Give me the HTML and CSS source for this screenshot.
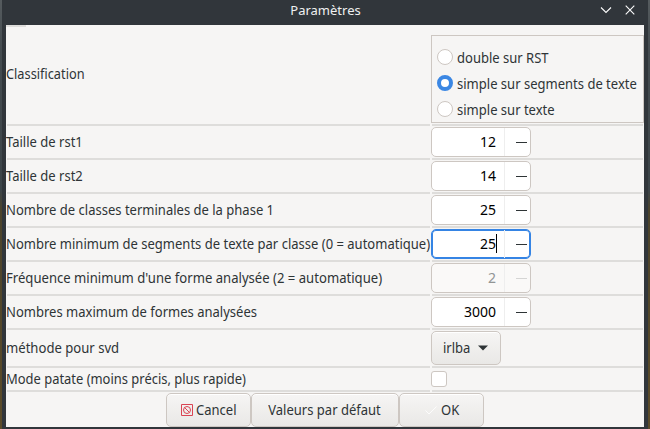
FILE: index.html
```html
<!DOCTYPE html>
<html lang="fr">
<head>
<meta charset="utf-8">
<title>Paramètres</title>
<link rel="stylesheet" href="styles.css">
</head>
<body>
<div class="window">
  <header class="titlebar">
    <h1 class="title">Paramètres</h1>
    <div class="controls">
      <svg width="12" height="12" viewBox="0 0 12 12"><path d="M1 3.5l5 5 5-5"/></svg>
      <svg width="12" height="12" viewBox="0 0 12 12"><path d="M1.7 1.7l8.6 8.6M10.3 1.7l-8.6 8.6"/></svg>
    </div>
  </header>
  <main class="content">
    <div class="row row-first">
      <div class="label"><span class="short">Classification</span></div>
      <div class="field">
        <div class="radios">
          <div class="option"><i class="radio"></i><span>double sur RST</span></div>
          <div class="option"><i class="radio checked"></i><span>simple sur segments de texte</span></div>
          <div class="option"><i class="radio"></i><span>simple sur texte</span></div>
        </div>
      </div>
    </div>
    <div class="row"><div class="label"><span>Taille de rst1</span></div><div class="field"><div class="spin"><span class="value">12</span><span class="minus"></span></div></div></div>
    <div class="row"><div class="label"><span>Taille de rst2</span></div><div class="field"><div class="spin"><span class="value">14</span><span class="minus"></span></div></div></div>
    <div class="row"><div class="label"><span>Nombre de classes terminales de la phase 1</span></div><div class="field"><div class="spin"><span class="value">25</span><span class="minus"></span></div></div></div>
    <div class="row"><div class="label"><span>Nombre minimum de segments de texte par classe (0 = automatique)</span></div><div class="field"><div class="spin focused"><span class="value">25<i class="caret"></i></span><span class="minus"></span></div></div></div>
    <div class="row"><div class="label"><span class="wide">Fréquence minimum d'une forme analysée (2 = automatique)</span></div><div class="field"><div class="spin disabled"><span class="value">2</span><span class="minus"></span></div></div></div>
    <div class="row"><div class="label"><span>Nombres maximum de formes analysées</span></div><div class="field"><div class="spin"><span class="value">3000</span><span class="minus"></span></div></div></div>
    <div class="row row-select"><div class="label"><span class="wide">méthode pour svd</span></div><div class="field"><div class="button select"><span>irlba</span><svg width="10" height="6" viewBox="0 0 10 6"><path d="M0 .5h10L5 5.5z" fill="#2e3436"/></svg></div></div></div>
    <div class="row row-check"><div class="label"><span class="tight">Mode patate (moins précis, plus rapide)</span></div><div class="field"><i class="checkbox"></i></div></div>
    <footer class="actions">
      <div class="button cancel"><svg width="12" height="12" viewBox="0 0 12 12" fill="none" stroke="#da4453"><path d="M.5.5h11v11H.5z"/><circle cx="6" cy="6" r="3.5"/><path d="M3.5 3.5l5 5"/></svg><span>Cancel</span></div>
      <div class="button defaults"><span>Valeurs par défaut</span></div>
      <div class="button ok"><svg width="12" height="12" viewBox="0 0 12 12" fill="none" stroke="#fcfcfc"><path d="M.5 6.5l3.5 3.5L11.5 2.5"/></svg><span>OK</span></div>
    </footer>
  </main>
</div>
</body>
</html>
```

FILE: styles.css
```css
* { box-sizing: border-box; }
body {
  margin: 0;
  width: 650px;
  height: 429px;
  overflow: hidden;
  padding: 0 2px;
  background: linear-gradient(#555b5e, #454c50 50px, #3c4448 190px, #4b432c 210px, #5b4b29);
  font: 14px/20px "Noto Sans", sans-serif;
  color: #2e3436;
}
.window { height: 429px; padding: 0 4px 2px; background: #31363b; }
.titlebar { position: relative; height: 25px; }
.title {
  margin: 0;
  padding-left: 1px;
  text-align: center;
  font-size: 13px;
  line-height: 20px;
  font-weight: 400;
  color: #eff0f1;
}
.controls { position: absolute; top: 4px; right: 8px; display: flex; gap: 12px; }
.controls svg { fill: none; stroke: #fcfcfc; stroke-width: 1.1; }
.content {
  height: 402px;
  background: linear-gradient(#dedddb, #dedddb) 0 0 / 20px 2px no-repeat #f6f5f4;
}
.row { display: grid; grid-template-columns: 424px 212px; column-gap: 1px; height: 34px; padding-right: 1px; }
.row-first { height: 101px; }
.row-select { height: 38px; }
.row-check { height: 24px; }
.label, .field {
  display: flex;
  align-items: center;
  padding-bottom: 2px;
  background: linear-gradient(#dedddb, #dedddb) 1px 100% / calc(100% - 1px) 2px no-repeat;
}
.label { white-space: nowrap; }
.row-first .label { padding-bottom: 4px; }
.label span, .option span, .button span { transform: scaleX(.93); transform-origin: 0 50%; }
.label .short { transform: scaleX(.912); }
.label .tight { transform: scaleX(.924); }
.label .wide { transform: scaleX(.936); }
.row-first .field { align-items: flex-end; padding-bottom: 3px; }
.radios {
  flex: none;
  width: 213px;
  height: 88px;
  padding: 9px 0 0 5px;
  border: 1px solid #cdc7c2;
}
.option { display: flex; align-items: center; height: 26px; gap: 4px; white-space: nowrap; }
.radio {
  flex: none;
  width: 16px;
  height: 16px;
  margin-bottom: 2px;
  border: 1px solid #cdc7c2;
  border-radius: 50%;
  background: #fff;
}
.radio.checked { border: 4px solid #3b87e3; }
.spin {
  display: flex;
  width: 100px;
  height: 30px;
  border: 1px solid #cdc7c2;
  border-radius: 5px;
  background: #fff;
  color: #000;
}
.value { position: relative; width: 73px; padding-right: 8px; line-height: 28px; text-align: right; border-right: 1px solid #eee; }
.minus { width: 11px; height: 1px; margin: 14px 0 0 11px; background: #2e3436; }
.focused { border-color: #3584e4; box-shadow: inset 0 0 0 1px #3584e4; }
.caret { position: absolute; right: 7px; top: 4px; width: 1px; height: 19px; background: #000; }
.disabled { background: #faf9f8; color: #929595; }
.disabled .minus { background: #d5d5d4; }
.button {
  display: flex;
  align-items: center;
  height: 34px;
  border: 1px solid #cdc7c2;
  border-radius: 5px;
  background: linear-gradient(#f6f5f4, #e9e8e6);
  box-shadow: inset 0 1px #fff;
  white-space: nowrap;
}
.select { width: 70px; padding: 0 12px 0 11px; justify-content: space-between; }
.checkbox { width: 16px; height: 16px; border: 1px solid #cdc7c2; border-radius: 3px; background: #fff; }
.actions { display: flex; justify-content: center; height: 35px; padding-top: 1px; }
.cancel { width: 85px; padding-left: 14px; gap: 3px; }
.defaults { width: 148px; justify-content: center; }
.defaults span { transform-origin: 50% 50%; }
.ok { width: 85px; padding-left: 25px; gap: 4px; }
```
